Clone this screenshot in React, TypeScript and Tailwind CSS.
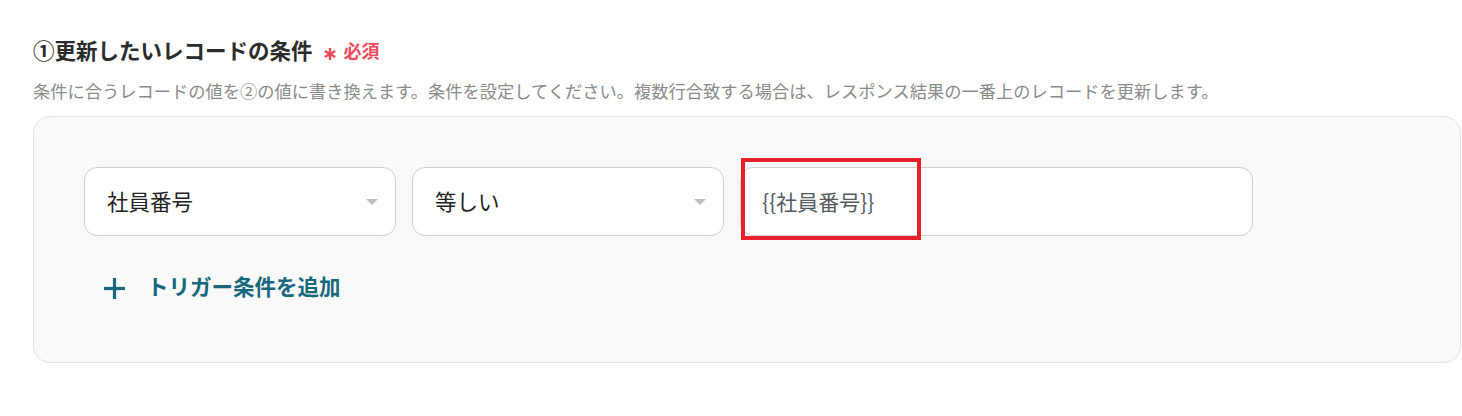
const font = { fontFamily: '"Noto Sans CJK JP", "Noto Sans", sans-serif' };

function SelectBox({ label, width }: { label: string; width: string }) {
  return (
    <div
      className={`${width} h-[69px] flex items-center justify-between rounded-[13px] border border-[#cfcfcf] bg-white pl-[22px] pr-[17px]`}
    >
      <span className="text-[21.5px] text-[#222]">{label}</span>
      <span className="w-0 h-0 border-l-[6px] border-r-[6px] border-t-[6px] border-l-transparent border-r-transparent border-t-[#bdbdbd]" />
    </div>
  );
}

function Asterisk() {
  return (
    <svg width="14" height="12" viewBox="0 0 14 12" className="mt-[7px]">
      <g stroke="#ef4a5b" strokeWidth="2.4" strokeLinecap="butt">
        <line x1="7" y1="0" x2="7" y2="12" />
        <line x1="1.8" y1="3" x2="12.2" y2="9" />
        <line x1="1.8" y1="9" x2="12.2" y2="3" />
      </g>
    </svg>
  );
}

export default function App() {
  return (
    <div className="bg-white w-[1462px] h-[416px] pl-[33px] pr-[1px] pt-[36px]" style={font}>
      <div className="flex items-center h-[28px]">
        <h2 className="text-[21.5px] font-bold text-[#2b2b2b] leading-[28px]">①更新したいレコードの条件</h2>
        <span className="ml-[10px] flex">
          <Asterisk />
        </span>
        <span className="ml-[7px] text-[18px] font-bold text-[#ef4a5b]">必須</span>
      </div>
      <p className="mt-[16px] text-[17.25px] leading-[22px] text-[#8a8a8a] whitespace-nowrap">
        条件に合うレコードの値を②の値に書き換えます。条件を設定してください。複数行合致する場合は、レスポンス結果の一番上のレコードを更新します。
      </p>
      <div className="mt-[14px] h-[247px] rounded-[17px] border border-[#e3e3e6] bg-[#f9f9f9] pl-[50px] pt-[50px]">
        <div className="flex gap-[16px]">
          <SelectBox label="社員番号" width="w-[312px]" />
          <SelectBox label="等しい" width="w-[312px]" />
          <div className="relative w-[513px] h-[69px] flex items-center rounded-[13px] border border-[#cfcfcf] bg-white pl-[21px]">
            <span className="text-[21px] text-[#555a60]">{"{{社員番号}}"}</span>
            <div className="absolute left-[0px] top-[-10px] w-[180px] h-[82px] border-[4px] border-[#e8202c]" />
          </div>
        </div>
        <div className="mt-[35px] flex items-center pl-[20px] text-[#17687d]">
          <svg width="21" height="21" viewBox="0 0 21 21" className="mt-[5px]">
            <g stroke="#17687d" strokeWidth="3.2">
              <line x1="10.5" y1="0" x2="10.5" y2="21" />
              <line x1="0" y1="10.5" x2="21" y2="10.5" />
            </g>
          </svg>
          <span className="ml-[22px] text-[21.5px] font-bold leading-[30px]">トリガー条件を追加</span>
        </div>
      </div>
    </div>
  );
}
